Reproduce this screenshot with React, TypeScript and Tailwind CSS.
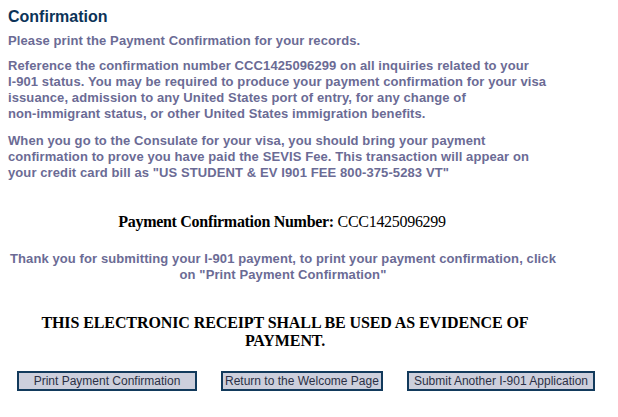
import React from "react";

const sans = { fontFamily: '"Liberation Sans", Arial, sans-serif' };

export default function App() {
  return (
    <div className="w-[618px] h-[417px] bg-white overflow-hidden font-['Liberation_Sans',Arial,sans-serif]">
      <div className="px-2">
        <h1 className="mt-[7px] text-[16px] leading-[19px] font-bold text-[#0b3358]">Confirmation</h1>
        <p className="mt-[7px] text-[13px] leading-[16px] font-bold tracking-[0.1px] text-[#6b6b95] whitespace-nowrap">
          Please print the Payment Confirmation for your records.
        </p>
        <p className="mt-[9px] text-[13px] leading-[16px] font-bold tracking-[0.1px] text-[#6b6b95] whitespace-nowrap">
          Reference the confirmation number CCC1425096299 on all inquiries related to your
          <br />
          I-901 status. You may be required to produce your payment confirmation for your visa
          <br />
          issuance, admission to any United States port of entry, for any change of
          <br />
          non-immigrant status, or other United States immigration benefits.
        </p>
        <p className="mt-[11px] text-[13px] leading-[16px] font-bold tracking-[0.1px] text-[#6b6b95] whitespace-nowrap">
          When you go to the Consulate for your visa, you should bring your payment
          <br />
          confirmation to prove you have paid the SEVIS Fee. This transaction will appear on
          <br />
          your credit card bill as "US STUDENT &amp; EV I901 FEE 800-375-5283 VT"
        </p>
      </div>
      <div className="w-[564px] mt-[32px] text-center text-[16px] leading-[18px] tracking-[-0.3px] text-black whitespace-nowrap font-['Liberation_Serif','Times_New_Roman',serif]">
        <span className="font-bold">Payment Confirmation Number:</span> CCC1425096299
      </div>
      <div className="w-[566px] mt-[20px] text-center text-[13px] leading-[16px] font-bold tracking-[0.1px] text-[#6b6b95] whitespace-nowrap">
        Thank you for submitting your I-901 payment, to print your payment confirmation, click
        <br />
        on "Print Payment Confirmation"
      </div>
      <div className="w-[570px] mt-[31px] text-center text-[16px] leading-[18px] font-bold tracking-[-0.1px] text-black whitespace-nowrap font-['Liberation_Serif','Times_New_Roman',serif]">
        THIS ELECTRONIC RECEIPT SHALL BE USED AS EVIDENCE OF
        <br />
        PAYMENT.
      </div>
      <div className="mt-[21px] ml-[17px] flex gap-[24px]" style={sans}>
        <button className="w-[180px] h-[20px] border-2 border-[#123a5c] bg-[#cdcfdc] text-[12px] leading-[16px] text-[#2a2f45]">
          Print Payment Confirmation
        </button>
        <button className="h-[20px] px-[2px] border-2 border-[#123a5c] bg-[#cdcfdc] text-[12px] leading-[16px] text-[#2a2f45] whitespace-nowrap">
          Return to the Welcome Page
        </button>
        <button className="h-[20px] px-[5px] border-2 border-[#123a5c] bg-[#cdcfdc] text-[12px] leading-[16px] text-[#2a2f45] whitespace-nowrap">
          Submit Another I-901 Application
        </button>
      </div>
    </div>
  );
}
